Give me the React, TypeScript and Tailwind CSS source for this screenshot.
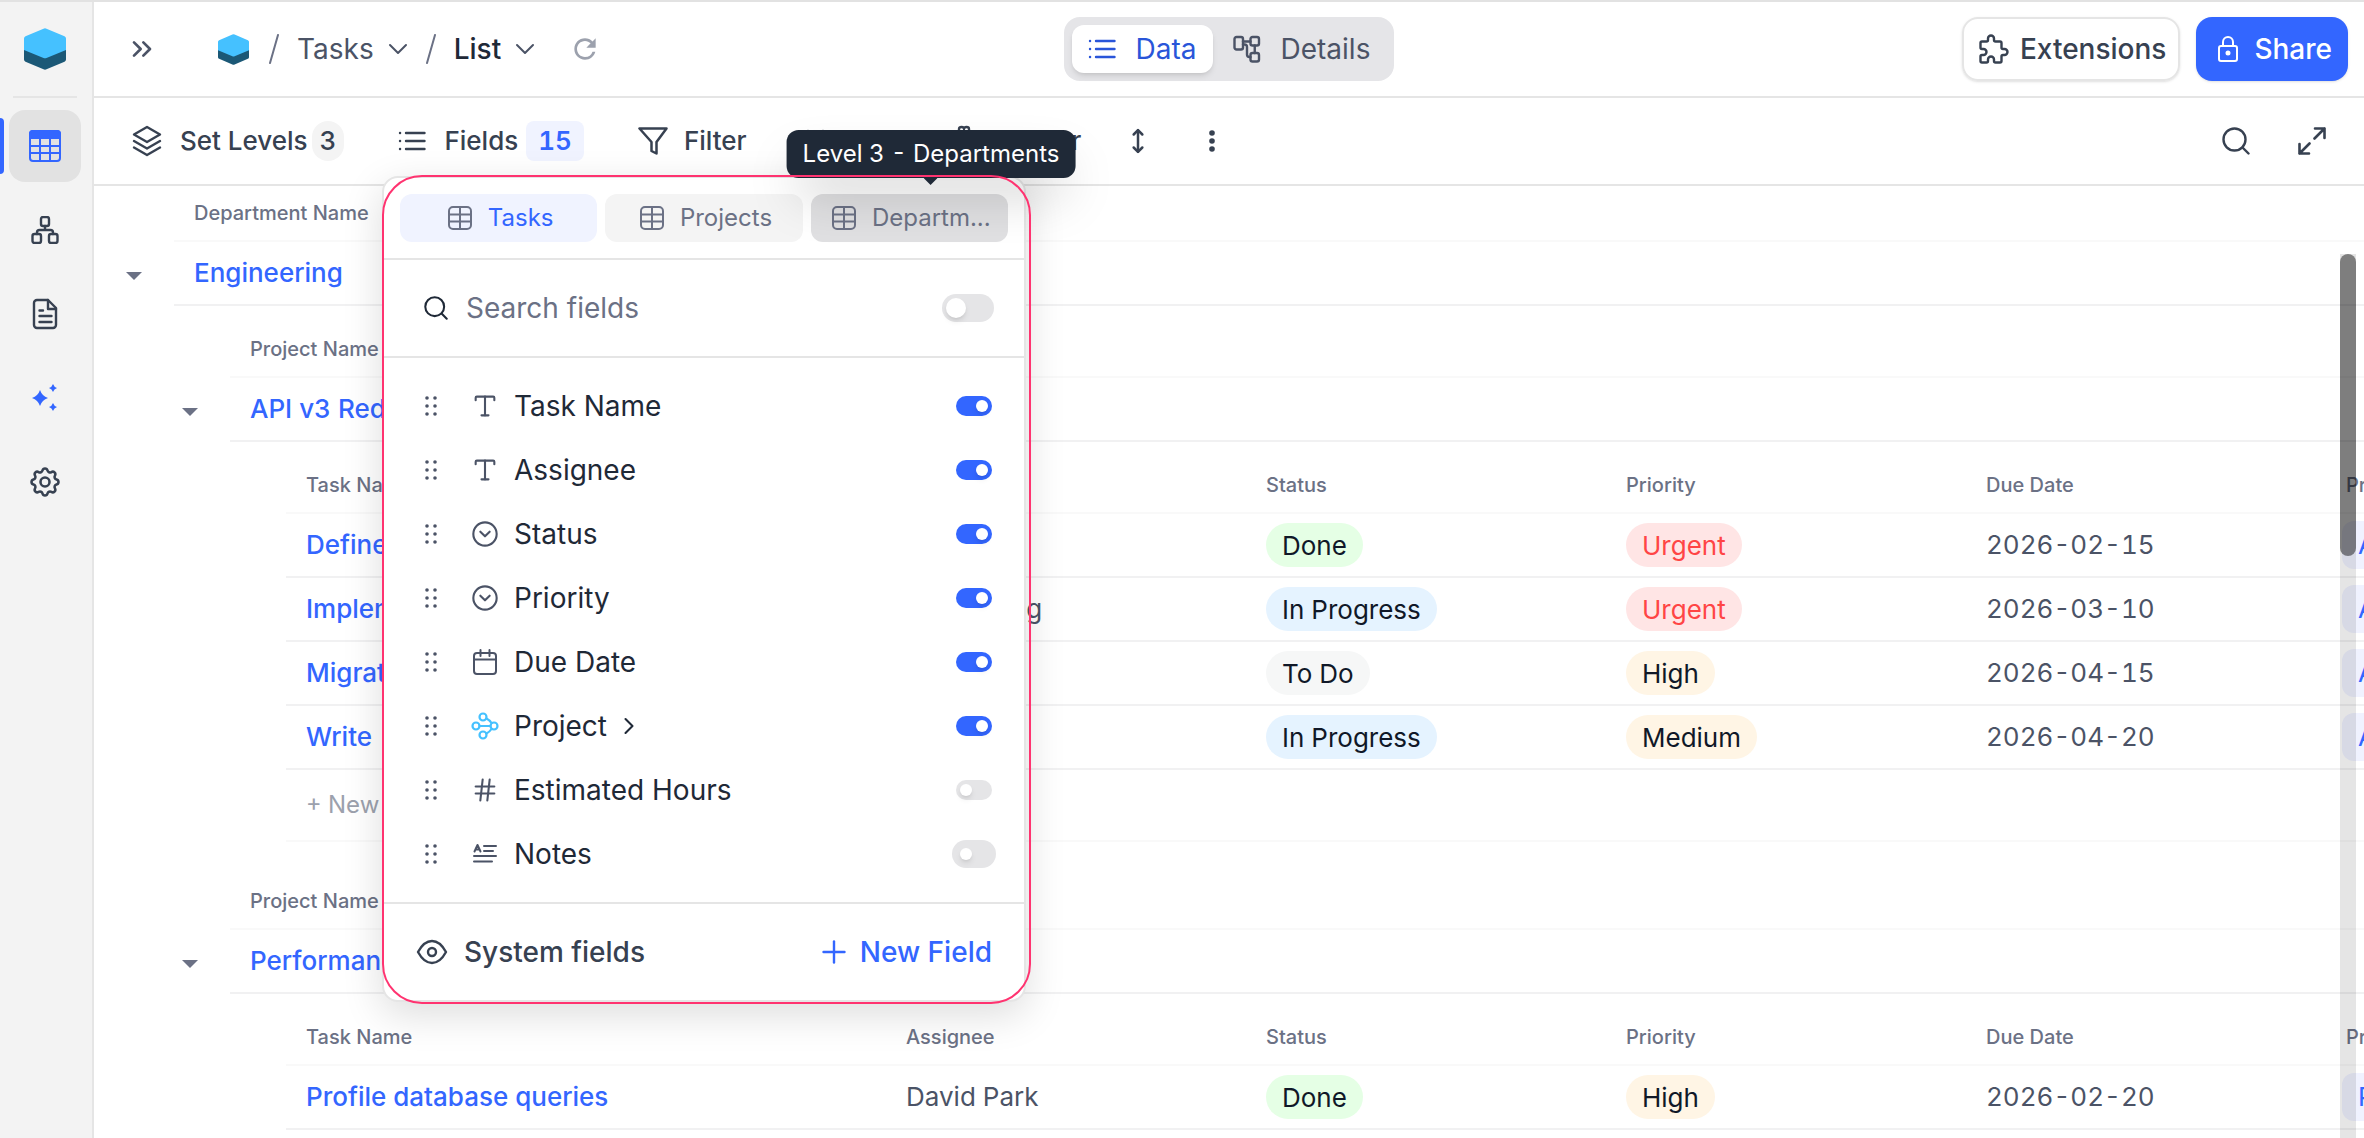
import React, { useState } from 'react';
import { ChevronDown, ChevronRight, ChevronsRight, CircleChevronDown, Hash, MoveVertical, Plus, Type } from 'lucide-react';
import { MdRefresh } from 'react-icons/md';
import { TbPuzzle, TbSettings } from 'react-icons/tb';
import clsx from 'clsx';

interface IconProps {
  className?: string;
}

interface Task {
  name: string;
  assignee: string;
  status: string;
  priority: string;
  due: string;
  project: string;
}

interface Field {
  name: string;
  icon: React.ReactNode;
  on: boolean;
  linked?: boolean;
  hovered?: boolean;
}

const stroke = { fill: 'none', stroke: 'currentColor', strokeLinecap: 'round', strokeLinejoin: 'round' } as const;

const CubeLogo = ({ className }: IconProps) => (
  <svg viewBox="0 0 42 42" className={className} aria-hidden="true">
    <path d="M0 20 21 29 42 20V31.500Q42 33 40.500 33.700L22.500 41.300Q21 42 19.500 41.300L1.500 33.700Q0 33 0 31.500Z" fill="#1b5876" />
    <path d="M0 10.500Q0 9 1.500 8.300L19.500.700Q21 0 22.500.700L40.500 8.300Q42 9 42 10.500V22L22.500 30Q21 30.700 19.500 30L0 22Z" fill="#45c1ff" />
  </svg>
);

const GridIcon = ({ className }: IconProps) => (
  <svg viewBox="0 0 32 32" className={className} {...stroke} strokeWidth="2" aria-hidden="true">
    <rect x="1" y="1" width="30" height="30" rx="3" />
    <path d="M1 8V4a3 3 0 0 1 3-3h24a3 3 0 0 1 3 3v4Z" fill="currentColor" />
    <path d="M1 16h30M1 23h30M11 8v23M21 8v23" />
  </svg>
);

const SitemapIcon = ({ className }: IconProps) => (
  <svg viewBox="0 0 28 28" className={className} {...stroke} strokeWidth="2.400" aria-hidden="true">
    <rect x="10" y="1" width="8" height="9" rx="2" />
    <rect x="1.500" y="18" width="8.500" height="9" rx="2" />
    <rect x="18" y="18" width="8.500" height="9" rx="2" />
    <path d="M14 10v4M6 18v-1.500Q6 14 8.500 14h11Q22 14 22 16.500V18" />
  </svg>
);

const DocIcon = ({ className }: IconProps) => (
  <svg viewBox="0 0 28 32" className={className} {...stroke} strokeWidth="2.400" aria-hidden="true">
    <path d="M3 5a3 3 0 0 1 3-3h11l8 8v17a3 3 0 0 1-3 3H6a3 3 0 0 1-3-3Z" />
    <path d="M17 2v9h8M8.500 12.500h3.500M8.500 18h12M8.500 24h12" />
  </svg>
);

const SparkleIcon = ({ className }: IconProps) => (
  <svg viewBox="0 0 28 28" className={className} fill="currentColor" aria-hidden="true">
    <path d="M9 6q2 6 8 8-6 2-8 8-2-6-8-8 6-2 8-8ZM22 0q1 3 4 4-3 1-4 4-1-3-4-4 3-1 4-4ZM22 19q1 3 4 4-3 1-4 4-1-3-4-4 3-1 4-4Z" />
  </svg>
);

const ListIcon = ({ className }: IconProps) => (
  <svg viewBox="0 0 28 28" className={className} {...stroke} strokeWidth="2.400" aria-hidden="true">
    <path d="M2 6h.1M2 14h.1M2 22h.1M8 6h18.500M8 14h18.500M8 22h18.500" />
  </svg>
);

const RelationIcon = ({ className }: IconProps) => (
  <svg viewBox="0 0 28 28" className={className} {...stroke} strokeWidth="2.400" aria-hidden="true">
    <rect x="1.500" y="2" width="8.500" height="12.500" rx="2" />
    <rect x="17.500" y="2" width="8.500" height="8.500" rx="2" />
    <rect x="17.500" y="18" width="8.500" height="8.500" rx="2" />
    <path d="M10 6.500h7.500M21.750 10.500V18M10 9.500h1.500q2.500 0 2.500 2.500v7.500q0 2.500 2.500 2.500h1" />
  </svg>
);

const LayersIcon = ({ className }: IconProps) => (
  <svg viewBox="0 0 30 32" className={className} {...stroke} strokeWidth="2.400" aria-hidden="true">
    <path d="M15 2 28 9.500 15 17 2 9.500ZM2 16l13 7.500L28 16M2 22.500 15 30l13-7.500" />
  </svg>
);

const FunnelIcon = ({ className }: IconProps) => (
  <svg viewBox="0 0 30 28" className={className} {...stroke} strokeWidth="2.500" aria-hidden="true">
    <path d="M1.500 1.500h27L18.500 15v11.500l-5-2.500v-9Z" />
  </svg>
);

const SearchIcon = ({ className }: IconProps) => (
  <svg viewBox="0 0 28 28" className={className} {...stroke} strokeWidth="2.400" aria-hidden="true">
    <circle cx="12.500" cy="12.500" r="11" />
    <path d="m20.500 20.500 6 6" />
  </svg>
);

const ExpandIcon = ({ className }: IconProps) => (
  <svg viewBox="0 0 28 28" className={className} {...stroke} strokeWidth="2.600" aria-hidden="true">
    <path d="M17 1.500h9.500V11M26.500 1.500 16.500 11.500M1.500 17v9.500H11M1.500 26.500l10-10" />
  </svg>
);

const SortIcon = ({ className }: IconProps) => (
  <svg viewBox="0 0 28 28" className={className} {...stroke} strokeWidth="2.400" aria-hidden="true">
    <path d="M7 4v20M2 19l5 5 5-5M22 24V4M17 9l5-5 5 5" />
  </svg>
);

const PaintIcon = ({ className }: IconProps) => (
  <svg viewBox="0 0 28 32" className={className} {...stroke} strokeWidth="2.400" aria-hidden="true">
    <path d="M8 17V4q0-2 2.500-2T13 4q0-2 2.500-2T18 4v13M5 17h18v4q0 2-2 2h-4v7h-6v-7H7q-2 0-2-2Z" />
  </svg>
);

const LockIcon = ({ className }: IconProps) => (
  <svg viewBox="0 0 20 26" className={className} {...stroke} strokeWidth="2" aria-hidden="true">
    <rect x="1" y="10" width="18" height="15" rx="2" />
    <path d="M5 10V6a5 5 0 0 1 10 0v4" />
    <circle cx="10" cy="17" r="1.500" fill="currentColor" />
  </svg>
);

const TableIcon = ({ className }: IconProps) => (
  <svg viewBox="0 0 24 24" className={className} {...stroke} strokeWidth="2" aria-hidden="true">
    <rect x="1" y="1" width="22" height="22" rx="4" />
    <path d="M12 1v22M1 8.500h22M1 15.500h22" />
  </svg>
);

const CalendarIcon = ({ className }: IconProps) => (
  <svg viewBox="0 0 24 26" className={className} {...stroke} strokeWidth="2" aria-hidden="true">
    <rect x="1" y="4" width="22" height="21" rx="3" />
    <path d="M1 10.500h22M7.500 1v6M16.500 1v6" />
  </svg>
);

const LinkedIcon = ({ className }: IconProps) => (
  <svg viewBox="0 0 28 28" className={className} {...stroke} strokeWidth="2.200" aria-hidden="true">
    <circle cx="12" cy="5" r="3.500" />
    <circle cx="5" cy="14" r="3.500" />
    <circle cx="23" cy="14" r="3.500" />
    <circle cx="12" cy="23" r="3.500" />
    <path d="M8.500 14h11M15.500 6.500q3 1.500 5 4.500M15.500 21.500q3-1.500 5-4.500" />
  </svg>
);

const LongTextIcon = ({ className }: IconProps) => (
  <svg viewBox="0 0 24 24" className={className} {...stroke} strokeWidth="2" aria-hidden="true">
    <path d="m1.500 9.500 3-6.500 3 6.500M3 7.500h3M11 4h12M11 9h9M1 14h22M1 19.500h18" />
  </svg>
);

const EyeIcon = ({ className }: IconProps) => (
  <svg viewBox="0 0 32 26" className={className} {...stroke} strokeWidth="2.400" aria-hidden="true">
    <path d="M2 13Q8 2 16 2t14 11q-6 11-14 11T2 13Z" />
    <circle cx="16" cy="13" r="4" />
  </svg>
);

const GripIcon = ({ className }: IconProps) => (
  <svg viewBox="0 0 14 20" className={className} fill="currentColor" aria-hidden="true">
    {[2, 10, 18].map(y => [3, 11].map(x => <circle key={`${x}-${y}`} cx={x} cy={y} r="1.800" />))}
  </svg>
);

const NAV = [
  { label: 'Tables', icon: <GridIcon className="size-8" />, active: true },
  { label: 'Relations', icon: <SitemapIcon className="size-7" /> },
  { label: 'Documents', icon: <DocIcon className="h-8 w-7" /> },
  { label: 'Assistant', icon: <SparkleIcon className="size-7 text-[#3366ff]" /> },
  { label: 'Settings', icon: <TbSettings className="size-9 stroke-[1.7]" /> },
];

const FIELDS: Field[] = [
  { name: 'Task Name', icon: <Type className="size-7" strokeWidth={1.8} />, on: true },
  { name: 'Assignee', icon: <Type className="size-7" strokeWidth={1.8} />, on: true },
  { name: 'Status', icon: <CircleChevronDown className="size-7" strokeWidth={1.8} />, on: true },
  { name: 'Priority', icon: <CircleChevronDown className="size-7" strokeWidth={1.8} />, on: true },
  { name: 'Due Date', icon: <CalendarIcon className="h-[26px] w-6" />, on: true },
  { name: 'Project', icon: <LinkedIcon className="size-7 text-[#45c1ff]" />, on: true, linked: true },
  { name: 'Estimated Hours', icon: <Hash className="size-7" strokeWidth={1.8} />, on: false },
  { name: 'Notes', icon: <LongTextIcon className="size-6" />, on: false, hovered: true },
];

const API_TASKS: Task[] = [
  { name: 'Define schema', assignee: 'Maria', status: 'Done', priority: 'Urgent', due: '2026-02-15', project: 'API v3 Redesign' },
  { name: 'Implement auth', assignee: 'Emily Kang', status: 'In Progress', priority: 'Urgent', due: '2026-03-10', project: 'API v3 Redesign' },
  { name: 'Migrate clients', assignee: 'Lena', status: 'To Do', priority: 'High', due: '2026-04-15', project: 'API v3 Redesign' },
  { name: 'Write', assignee: 'Sarah', status: 'In Progress', priority: 'Medium', due: '2026-04-20', project: 'API v3 Redesign' },
];

const PERF_TASKS: Task[] = [
  { name: 'Profile database queries', assignee: 'David Park', status: 'Done', priority: 'High', due: '2026-02-20', project: 'Performance' },
];

const PILL_COLORS: Record<string, string> = {
  'Done': 'bg-[#e5ffe5] text-gray-900',
  'In Progress': 'bg-[#e5f3ff] text-gray-900',
  'To Do': 'bg-[#f6f7f7] text-gray-900',
  'Urgent': 'bg-[#ffe5e5] text-[#ff4545]',
  'High': 'bg-[#fff5e5] text-gray-900',
  'Medium': 'bg-[#fff5e5] text-gray-900',
};

const Pill = ({ value }: { value: string }) => (
  <span className={clsx('flex h-11 w-fit items-center rounded-full px-4 pt-[2px]', PILL_COLORS[value])}>{value}</span>
);

const Caret = ({ label }: { label: string }) => (
  <button aria-label={`Collapse ${label}`} className="flex h-full w-14 shrink-0 items-center justify-center pr-6 pt-1 text-[#6b7185]">
    <svg viewBox="0 0 16 8" className="h-2 w-4" fill="currentColor" aria-hidden="true"><path d="M0 0h16L8 8Z" /></svg>
  </button>
);

interface GroupProps {
  column: string;
  name: string;
  children: React.ReactNode;
}

// One expandable level: column caption, the record row, then everything nested below it
const Group = ({ column, name, children }: GroupProps) => (
  <section>
    <div className="ml-14 flex h-14 items-center border-b-2 border-[#f9f9f9] pl-5 text-xl font-medium text-[#6b7185]">{column}</div>
    <div className="flex h-16 items-center">
      <Caret label={name} />
      <div className="flex h-full flex-1 items-center border-b-2 border-[#f1f1f2] pl-5">
        <a href="#" className="font-medium text-[#3366ff]">{name}</a>
      </div>
    </div>
    <div className="ml-14 flex flex-col gap-8 pt-4">{children}</div>
  </section>
);

const TaskTable = ({ tasks, canAdd }: { tasks: Task[]; canAdd?: boolean }) => (
  <div className="ml-14">
    <table className="w-[2400px] table-fixed border-separate border-spacing-0 text-left">
      <colgroup>
        <col className="w-[600px]" />
        <col className="w-[360px]" />
        <col className="w-[360px]" />
        <col className="w-[360px]" />
        <col className="w-[360px]" />
        <col className="w-[360px]" />
      </colgroup>
      <thead>
        <tr className="h-14 text-xl text-[#6b7185]">
          {['Task Name', 'Assignee', 'Status', 'Priority', 'Due Date', 'Project'].map(h => (
            <th key={h} className="border-b-2 border-[#f9f9f9] px-5 font-medium">{h}</th>
          ))}
        </tr>
      </thead>
      <tbody className="text-[#4b5366] [&_td]:border-b-2 [&_td]:border-[#f1f1f2]">
        {tasks.map(task => (
          <tr key={task.name} className="h-16">
            <td className="px-5"><a href="#" className="font-medium text-[#3366ff]">{task.name}</a></td>
            <td className="px-5">{task.assignee}</td>
            <td className="px-5"><Pill value={task.status} /></td>
            <td className="px-5"><Pill value={task.priority} /></td>
            <td className="px-5">{task.due}</td>
            <td className="px-4">
              <a href="#" className="flex h-12 w-fit items-center rounded-xl bg-[#f0f2ff] px-4 text-[#3366ff]">{task.project}</a>
            </td>
          </tr>
        ))}
      </tbody>
    </table>
    {canAdd && (
      <button className="flex h-[72px] w-full items-center border-b-2 border-[#f9f9f9] pl-5 text-2xl text-[#9ca1ad]">+ New</button>
    )}
  </div>
);

const Sidebar = () => (
  <aside className="flex w-[94px] shrink-0 flex-col items-center border-r-2 border-[#e5e5e5] bg-[#f3f3f3] pr-[2px]">
    <a href="#" aria-label="Home" className="flex h-[94px] items-center"><CubeLogo className="size-[42px]" /></a>
    <hr className="w-16 border-t-2 border-[#e5e5e5]" />
    <nav className="mt-3 flex w-full flex-col items-center gap-3">
      {NAV.map(item => (
        <div key={item.label} className="relative flex w-full justify-center">
          {item.active && <span className="absolute inset-y-2 left-0 w-1 rounded-r bg-[#3366ff]" />}
          <button
            aria-label={item.label}
            className={clsx('flex size-[72px] items-center justify-center rounded-2xl', item.active ? 'bg-[#e2e2e2] text-[#3366ff]' : 'text-[#374151]')}
          >
            {item.icon}
          </button>
        </div>
      ))}
    </nav>
  </aside>
);

const Slash = () => (
  <svg viewBox="0 0 10 30" className="ml-3 mr-[18px] h-[30px] w-[10px] text-[#6b7185]" {...stroke} strokeWidth="2" aria-hidden="true">
    <path d="M9 1 1 29" />
  </svg>
);

const Header = () => (
  <header className="flex h-24 items-center justify-between border-b-2 border-[#e5e5e5] px-4 text-[28px]">
    <div className="flex flex-1 items-center text-[#4b5366]">
      <button aria-label="Expand sidebar" className="ml-4"><ChevronsRight className="size-8" strokeWidth={2} /></button>
      <nav aria-label="Breadcrumb" className="ml-[60px] flex items-center">
        <CubeLogo className="mr-2 size-[31px]" />
        <Slash />
        <button className="flex items-center gap-2">Tasks <ChevronDown className="size-8" strokeWidth={1.5} /></button>
        <Slash />
        <button className="flex items-center gap-2 font-medium text-[#1f2937]">List <ChevronDown className="size-8 text-[#4b5366]" strokeWidth={1.5} /></button>
      </nav>
      <button aria-label="Refresh" className="ml-7 text-[#9ca1ad]"><MdRefresh className="size-8" /></button>
    </div>
    <div className="flex h-16 items-center rounded-2xl bg-[#e5e5e8] p-2">
      <button className="flex h-12 items-center gap-5 rounded-xl bg-white px-4 text-[#2955d9] shadow-md">
        <ListIcon className="size-7" /> Data
      </button>
      <button className="flex h-12 items-center gap-5 pl-5 pr-4 text-[#4b5366]">
        <RelationIcon className="size-7" /> Details
      </button>
    </div>
    <div className="flex flex-1 items-center justify-end gap-4 font-medium">
      <button className="flex h-16 items-center gap-2 rounded-2xl border-2 border-[#e5e5e5] px-3 text-[#374151] shadow-sm">
        <TbPuzzle className="size-9 stroke-[1.6]" /> Extensions
      </button>
      <button className="flex h-16 items-center gap-4 rounded-2xl bg-[#3366ff] pl-[22px] pr-4 text-white shadow-sm">
        <LockIcon className="h-[26px] w-5" /> Share
      </button>
    </div>
  </header>
);

const Toolbar = () => (
  <div className="flex h-[88px] items-center justify-between border-b-2 border-[#e5e5e5] px-[38px] text-[#374151]">
    <div className="flex items-center gap-[54px]">
      <button className="flex items-center">
        <LayersIcon className="h-8 w-[30px]" />
        <span className="ml-[18px] font-medium">Set Levels</span>
        <span className="ml-1 flex h-10 items-center rounded-2xl bg-[#f4f4f4] px-2 font-medium tabular-nums">3</span>
      </button>
      <button className="flex items-center">
        <ListIcon className="size-7" />
        <span className="ml-[18px] font-medium">Fields</span>
        <span className="ml-2 flex h-10 items-center rounded-lg bg-[#f0f3ff] px-3 font-semibold tabular-nums text-[#3366ff]">15</span>
      </button>
      <button className="flex items-center gap-4 font-medium"><FunnelIcon className="h-7 w-[30px]" /> Filter</button>
      <button className="flex items-center gap-4 font-medium"><SortIcon className="size-7" /> Sort</button>
      <button className="flex items-center gap-5 font-medium"><PaintIcon className="h-8 w-7" /> Colour</button>
      <button aria-label="Row height" className="-ml-[10px]"><MoveVertical className="size-[26px]" strokeWidth={2.3} /></button>
      <button aria-label="More" className="pl-1">
        <svg viewBox="0 0 6 24" className="h-6 w-[6px]" fill="currentColor" aria-hidden="true">
          <circle cx="3" cy="4" r="2.800" /><circle cx="3" cy="12" r="2.800" /><circle cx="3" cy="20" r="2.800" />
        </svg>
      </button>
    </div>
    <div className="flex items-center gap-12">
      <button aria-label="Search"><SearchIcon className="size-7" /></button>
      <button aria-label="Full screen"><ExpandIcon className="size-7" /></button>
    </div>
  </div>
);

const FieldsPopover = () => {
  const [fields, setFields] = useState(FIELDS);
  const [allOn, setAllOn] = useState(false);

  const toggle = (name: string) => {
    setFields(fields.map(f => (f.name === name ? { ...f, on: !f.on } : f)));
  };

  return (
    <div className="absolute left-[288px] top-[174px] z-10 w-[644px]">
      <div className="rounded-2xl border-2 border-[#e5e5e5] bg-white text-[28px] shadow-[0_12px_40px_rgba(0,0,0,0.14)]">
        <div className="flex gap-2 border-b-2 border-[#e5e5e5] p-4 text-2xl text-[#6b7185]">
          {['Tasks', 'Projects', 'Departm...'].map((tab, i) => (
            <button
              key={tab}
              className={clsx('flex h-12 flex-1 items-center justify-center gap-4 rounded-xl pl-1', i === 0 && 'bg-[#f0f3ff]', i === 1 && 'bg-[#f4f4f4]', i === 2 && 'bg-[#e0e0e2]')}
            >
              <TableIcon className="size-6" />
              <span className={clsx(i === 0 && 'text-[#3366ff]')}>{tab}</span>
            </button>
          ))}
        </div>
        <div className="flex h-[98px] items-center border-b-2 border-[#e5e5e5] pl-10 pr-[30px]">
          <label htmlFor="field-search" aria-label="Search fields"><SearchIcon className="size-6 text-[#1f2937]" /></label>
          <input id="field-search" placeholder="Search fields" className="ml-[18px] min-w-0 flex-1 outline-none placeholder:text-[#6b7185]" />
          <input
            type="checkbox"
            aria-label="Toggle all fields"
            checked={allOn}
            onChange={() => setAllOn(!allOn)}
            className="h-7 w-[52px] appearance-none rounded-full bg-[#e5e5e7] p-1 before:block before:size-5 before:rounded-full before:bg-white before:shadow-md checked:bg-[#3366ff] checked:before:ml-6"
          />
        </div>
        <ul className="border-b-2 border-[#e5e5e5] py-4 pl-10 pr-8 text-[#1f2937]">
          {fields.map(field => (
            <li key={field.name} className="flex h-16 items-center">
              <GripIcon className="h-5 w-[14px] text-[#4b5366]" />
              <span className="ml-8 flex w-[30px] justify-center text-[#4b5366]">{field.icon}</span>
              <label htmlFor={`field-${field.name}`} className="ml-[14px] flex flex-1 items-center gap-2">
                {field.name}
                {field.linked && <ChevronRight className="size-7" strokeWidth={1.8} />}
              </label>
              <input
                id={`field-${field.name}`}
                type="checkbox"
                checked={field.on}
                onChange={() => toggle(field.name)}
                className={clsx(
                  'h-5 w-9 appearance-none rounded-full bg-[#e5e5e7] p-1 before:block before:size-3 before:rounded-full before:bg-white before:shadow-md checked:bg-[#3366ff] checked:before:ml-4',
                  field.hovered && 'ring-4 ring-[#e5e5e7]'
                )}
              />
            </li>
          ))}
        </ul>
        <div className="flex h-24 items-center justify-between pl-8 pr-8 font-medium">
          <button className="flex items-center gap-4 text-[#374151]"><EyeIcon className="h-[26px] w-8" /> System fields</button>
          <button className="flex items-center gap-2 text-[#3366ff]"><Plus className="size-9" strokeWidth={1.6} /> New Field</button>
        </div>
      </div>
      <div role="tooltip" className="absolute -top-[46px] left-[549px] flex h-12 -translate-x-1/2 items-center whitespace-nowrap rounded-xl bg-[#1f2937] px-4 text-2xl tabular-nums text-white shadow-2xl">
        Level 3 - Departments
        <svg viewBox="0 0 14 7" className="absolute left-1/2 top-full h-[7px] w-[14px] -translate-x-1/2" aria-hidden="true"><path d="M0 0h14L7 7Z" fill="#1f2937" /></svg>
      </div>
      <div className="pointer-events-none absolute -bottom-[2px] -right-[5px] -top-px left-0 rounded-[40px] border-2 border-[#ff3370]" />
    </div>
  );
};

export default function App() {
  return (
    <div className="flex h-screen overflow-hidden border-t-2 border-[#e2e2e2] bg-white font-['Inter',sans-serif] text-[26px] leading-8">
      <Sidebar />
      <main className="relative flex min-w-0 flex-1 flex-col">
        <Header />
        <Toolbar />
        <div className="relative min-h-0 flex-1 overflow-hidden">
          <div className="pl-6 tabular-nums">
            <Group column="Department Name" name="Engineering">
              <Group column="Project Name" name="API v3 Redesign">
                <TaskTable tasks={API_TASKS} canAdd />
              </Group>
              <Group column="Project Name" name="Performance">
                <TaskTable tasks={PERF_TASKS} />
              </Group>
            </Group>
          </div>
          <div className="absolute bottom-0 right-2 top-[68px] w-4 bg-black/10">
            <div className="h-[302px] rounded-full bg-black/45" />
          </div>
        </div>
        <FieldsPopover />
      </main>
    </div>
  );
}
